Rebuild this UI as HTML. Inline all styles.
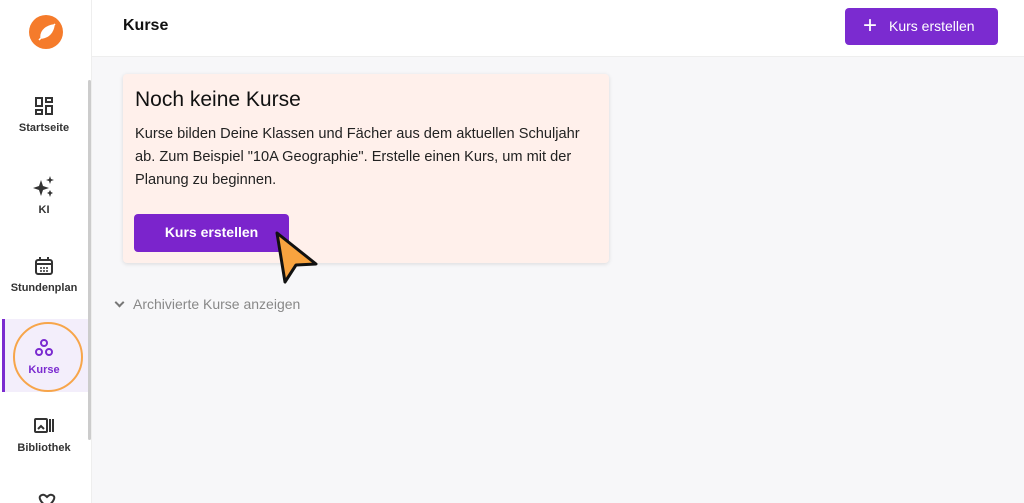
<!DOCTYPE html>
<html><head><meta charset="utf-8"><style>
*{box-sizing:border-box;margin:0;padding:0}
html,body{width:1024px;height:503px;overflow:hidden}
body{background:#f7f7f9;font-family:"Liberation Sans",sans-serif;position:relative}
.side{position:absolute;left:0;top:0;width:92px;height:503px;background:#fff;border-right:1px solid #eee}
.top{position:absolute;left:92px;top:0;right:0;height:57px;background:#fff;border-bottom:1px solid #eee}
.nav{position:absolute;left:0;width:88px;text-align:center;font-size:11px;font-weight:bold;color:#333}
.nav svg{display:block;margin:0 auto 6px}
</style></head><body>
<div class="side">
<svg style="position:absolute;left:29px;top:15px" width="34" height="34" viewBox="0 0 34 34"><circle cx="17" cy="17" r="17" fill="#f57b2b"/><path d="M10 25 L26 9 M12 22 C12 15 18 11 25 10 C24 17 20 22 13 23Z" fill="#fff" stroke="#fff" stroke-width="1.5"/></svg>
<div style="position:absolute;left:88px;top:80px;width:3px;height:360px;background:#ccc;border-radius:2px"></div>
<div class="nav" style="top:96px"><svg width="20" height="20" viewBox="0 0 20 20" fill="none" stroke="#333" stroke-width="2"><rect x="2" y="2" width="6" height="8"/><rect x="12" y="2" width="6" height="4"/><rect x="2" y="14" width="6" height="4"/><rect x="12" y="10" width="6" height="8"/></svg>Startseite</div>
<div class="nav" style="top:176px"><svg width="24" height="22" viewBox="0 0 24 22" fill="#333"><path d="M9 4 L11 10 L17 12 L11 14 L9 20 L7 14 L1 12 L7 10Z"/><path d="M18 0 L19 3 L22 4 L19 5 L18 8 L17 5 L14 4 L17 3Z"/><path d="M18 14 L19 16 L21 17 L19 18 L18 21 L17 18 L15 17 L17 16Z"/></svg>KI</div>
<div class="nav" style="top:256px"><svg width="20" height="20" viewBox="0 0 20 20" fill="none" stroke="#333" stroke-width="2"><rect x="2" y="4" width="16" height="14" rx="2"/><path d="M6 1v4M14 1v4M2 8h16"/><path d="M6 12h2M9 12h2M12 12h2M6 15h2M9 15h2M12 15h2" stroke-width="1.5"/></svg>Stundenplan</div>
<div style="position:absolute;left:2px;top:319px;width:86px;height:73px;background:#f3eefb;border-left:3px solid #7b2bd0"></div>
<div style="position:absolute;left:13px;top:322px;width:70px;height:70px;border:2px solid #f7a54a;border-radius:50%"></div>
<div class="nav" style="top:338px;color:#7b2bd0"><svg width="20" height="20" viewBox="0 0 20 20" fill="none" stroke="#7b2bd0" stroke-width="2"><circle cx="10" cy="5" r="3"/><circle cx="5" cy="14" r="3"/><circle cx="15" cy="14" r="3"/></svg>Kurse</div>
<div class="nav" style="top:416px"><svg width="22" height="20" viewBox="0 0 22 20" fill="none" stroke="#333" stroke-width="2"><rect x="2" y="3" width="12" height="13" rx="1"/><path d="M5 13l3-3 3 3M17 3v13M20 3v13"/></svg>Bibliothek</div>
<svg style="position:absolute;left:36px;top:493px" width="22" height="16" viewBox="0 0 22 16" fill="none" stroke="#333" stroke-width="2"><path d="M11 14 C3 8 2 3 6 2 C8 1 10 3 11 4 C12 3 14 1 16 2 C20 3 19 8 11 14Z"/></svg>
</div>
<div class="top">
<div style="position:absolute;left:31px;top:17px;font-size:16px;font-weight:bold;color:#111">Kurse</div>
<div style="position:absolute;left:753px;top:8px;width:153px;height:37px;background:#7b2bd0;border-radius:4px;color:#fff;font-size:14px;line-height:37px;padding-left:44px">Kurs erstellen</div>
<div style="position:absolute;left:771px;top:17px;color:#fff;font-size:24px;line-height:18px">+</div>
</div>
<div style="position:absolute;left:123px;top:74px;width:486px;height:189px;background:#fff0eb;border-radius:4px;box-shadow:0 1px 4px rgba(0,0,0,0.12)">
<div style="position:absolute;left:12px;top:14px;font-size:21px;color:#111">Noch keine Kurse</div>
<div style="position:absolute;left:12px;top:49px;width:455px;font-size:14.6px;line-height:23px;color:#222">Kurse bilden Deine Klassen und Fächer aus dem aktuellen Schuljahr ab. Zum Beispiel "10A Geographie". Erstelle einen Kurs, um mit der Planung zu beginnen.</div>
<div style="position:absolute;left:11px;top:140px;width:155px;height:38px;background:#7b24cc;border-radius:4px;color:#fff;font-size:14px;font-weight:bold;text-align:center;line-height:37px">Kurs erstellen</div>
</div>
<svg style="position:absolute;left:274px;top:230px" width="46" height="56" viewBox="0 0 46 56"><path d="M3 3 L42 34 L22 35 L11 52Z" fill="#f8a33f" stroke="#111" stroke-width="3" stroke-linejoin="round"/></svg>
<div style="position:absolute;left:114px;top:296px;font-size:14px;color:#888"><span style="display:inline-block;width:7px;height:7px;border-right:2px solid #777;border-bottom:2px solid #777;transform:rotate(45deg);margin:0 10px 3px 2px"></span>Archivierte Kurse anzeigen</div>
</body></html>
